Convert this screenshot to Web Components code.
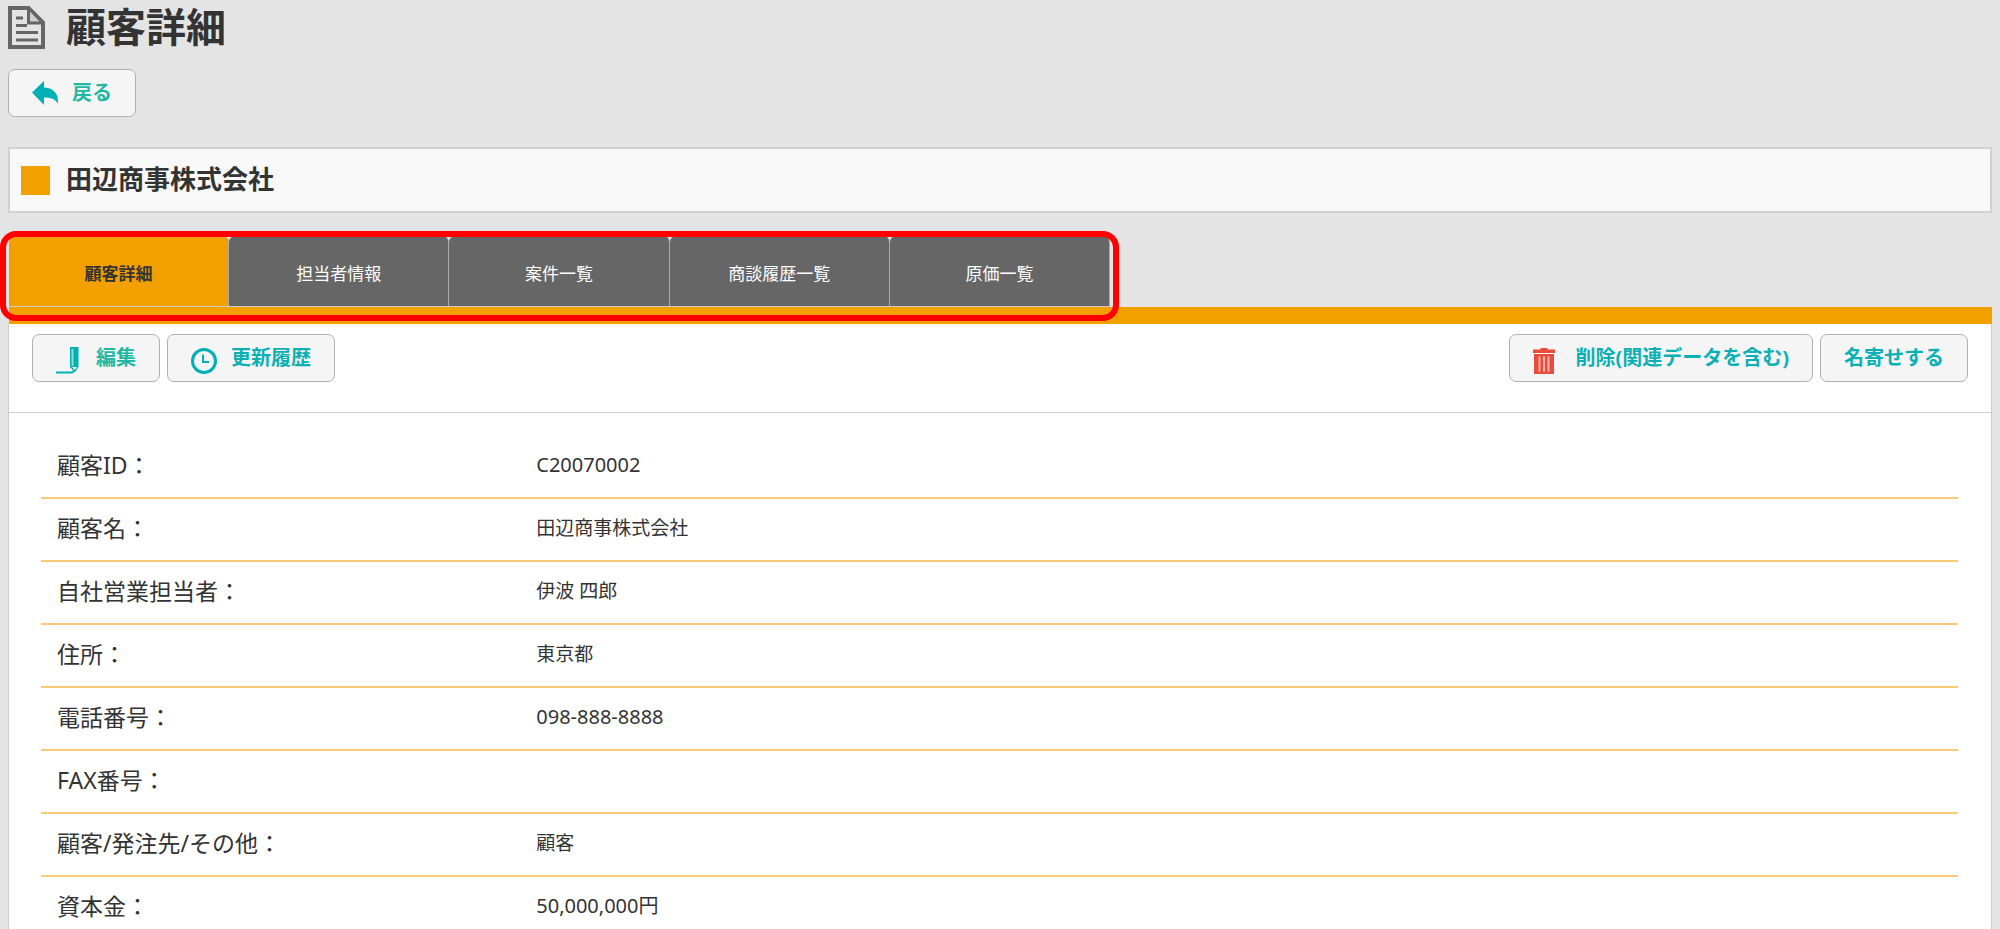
<!DOCTYPE html>
<html lang="ja">
<head>
<meta charset="utf-8">
<title>顧客詳細</title>
<style>
body{margin:0;background:#e4e4e4;color:#333;font-family:"Noto Sans","Noto Sans CJK JP",sans-serif}
</style>
</head>
<body>
<customer-page>
  <page-title slot="title">顧客詳細</page-title>
  <action-button slot="nav" icon="back">戻る</action-button>
  <company-bar slot="company">田辺商事株式会社</company-bar>
  <tab-bar slot="tabs"></tab-bar>
  <tool-bar slot="tools">
    <action-button icon="edit">編集</action-button>
    <action-button icon="clock">更新履歴</action-button>
    <action-button slot="end" icon="trash">削除(関連データを含む)</action-button>
    <action-button slot="end">名寄せする</action-button>
  </tool-bar>
  <detail-table slot="details"></detail-table>
</customer-page>
<script>
const ICONS = {
  back:'<svg width="26" height="26" viewBox="0 0 26 26"><path fill="#00b0b4" d="M0 12.500 12 1v6.500c8 0 14 5 14 14v2c-3-4.500-7-6-14-6V25z"/></svg>',
  edit:'<svg width="26" height="34" viewBox="2 -6 26 34"><path fill="none" stroke="#00b0b4" stroke-width="2" d="M1 25.500h17l4-3"/><path fill="#00b0b4" d="M16 0h8.500v20l-4 5-4.500-5z"/><path stroke="#8fdcdd" stroke-width="2" d="M18.500 2v17"/><path fill="#f5f5f5" d="M18 20h5l-2.500 3z"/></svg>',
  clock:'<svg width="26" height="32" viewBox="1 -5 26 32"><g fill="none" stroke="#00b0b4"><circle cx="14" cy="14" r="11.500" stroke-width="3"/><path stroke-width="2" d="M13 7.500V15h6"/></g></svg>',
  trash:'<svg width="28" height="32" viewBox="1 -5 28 32"><path fill="#e74c3c" d="M8.500 1h7v1.500h7.500V6H1V2.500h7.500zM2 7h20v20H2z"/><path stroke="#f8b5ae" stroke-width="2" d="M7.500 9.500v15M12 9.500v15M16.500 9.500v15"/></svg>'
};

class BaseElement extends HTMLElement {
  constructor(){
    super();
    this.attachShadow({mode:'open'}).innerHTML = '<style>:host,*{box-sizing:border-box}:host{display:block}</style>' + this.render();
  }
}

customElements.define('customer-page', class extends BaseElement {
  render(){return `<style>
    :host{padding:0 8px}
    .title{height:69px}
    .nav{height:78px}
    .company{margin-bottom:23px}
    .panel{background:#fff;border:solid #ccc;border-width:0 1px 1px}
  </style>
  <header class="title"><slot name="title"></slot></header>
  <nav class="nav"><slot name="nav"></slot></nav>
  <div class="company"><slot name="company"></slot></div>
  <slot name="tabs"></slot>
  <main class="panel"><slot name="tools"></slot><slot name="details"></slot></main>`}
});

customElements.define('page-title', class extends BaseElement {
  render(){return `<style>
    h1{display:flex;align-items:center;gap:21px;height:54px;margin:0;font-size:40px;line-height:54px}
    svg{flex:none}
  </style>
  <h1><svg width="37" height="43" viewBox="0 0 37 43"><path fill="none" stroke="#666" stroke-width="4" d="M2 2h18.500L35 16.500V41H2z"/><path fill="#cfcfcf" stroke="#666" stroke-width="3" d="M20.500 2v15H35z"/><path stroke="#666" stroke-width="3" d="M8 12h7M8 19.500h11M8 26.500h22M8 34h22"/></svg><slot></slot></h1>`}
});

customElements.define('action-button', class extends BaseElement {
  static observedAttributes = ['icon'];
  render(){return `<style>
    :host{display:inline-block}
    button{display:flex;align-items:center;gap:14px;height:48px;padding:0 23px;border:1px solid #b0b0b0;border-radius:7px;background:#f5f5f5;color:#0bb0b4;font:bold 20px/30px "Noto Sans","Noto Sans CJK JP",sans-serif;white-space:nowrap}
    :host([icon=back]) button,:host([icon=edit]) button{color:#1fb8a3}
    .icon{display:contents}
  </style>
  <button type="button"><span class="icon"></span><span><slot></slot></span></button>`}
  attributeChangedCallback(name, old, value){this.shadowRoot.querySelector('.icon').innerHTML = ICONS[value] || ''}
});

customElements.define('company-bar', class extends BaseElement {
  render(){return `<style>
    h2{display:flex;align-items:center;gap:16px;height:66px;margin:0;padding:0 11px;border:2px solid #d0d0d0;background:#f8f8f8;font-size:26px;line-height:36px}
    h2::before{content:"";width:29px;height:29px;background:#f2a000}
    span{padding-bottom:3px}
  </style><h2><span><slot></slot></span></h2>`}
});

customElements.define('tab-bar', class extends BaseElement {
  render(){return `<style>
    :host{margin-left:1px;border-bottom:17px solid #f2a000}
    nav{position:relative;display:grid;grid-template-columns:repeat(5,1fr);max-width:1101px;border-bottom:1px solid #ccc}
    a{height:70px;padding-top:23px;border-right:1px solid #aaa;border-radius:6px 6px 0 0;background:#666;color:#fff;font-size:17px;line-height:30px;text-align:center;text-decoration:none}
    a[aria-current]{background:#f2a000;color:#333;font-weight:bold}
    .highlight{position:absolute;inset:-5px -9px -15px -9px;border:6px solid #f00;border-radius:16px;pointer-events:none}
  </style>
  <nav><a href="#detail" aria-current="page">顧客詳細</a><a href="#contacts">担当者情報</a><a href="#projects">案件一覧</a><a href="#talks">商談履歴一覧</a><a href="#costs">原価一覧</a><span class="highlight"></span></nav>`}
});

customElements.define('tool-bar', class extends BaseElement {
  render(){return `<style>
    :host{display:flex;justify-content:space-between;height:89px;padding:10px 23px 0;border-bottom:1px solid #ccc}
    div{display:flex;gap:7px}
  </style><div><slot></slot></div><div><slot name="end"></slot></div>`}
});

customElements.define('detail-table', class extends BaseElement {
  render(){
    const rows = [['顧客ID：','C20070002',1],['顧客名：','田辺商事株式会社'],['自社営業担当者：','伊波 四郎'],['住所：','東京都'],['電話番号：','098-888-8888',1],['FAX番号：',''],['顧客/発注先/その他：','顧客'],['資本金：','50,000,000円',1]];
    return `<style>
    :host{padding:23px 33px 0 32px}
    table{width:100%;border-collapse:separate;border-spacing:0;table-layout:fixed}
    th,td{height:63px;padding:0 16px 4px;border-bottom:2px solid #f8ca78;text-align:left;font-weight:normal;line-height:32px}
    th{width:25%;font-size:23px}
    td{font-size:19px}
    td.number{font-size:20px}
  </style><table>${rows.map(([k,v,n])=>`<tr><th scope="row">${k}</th><td${n?' class="number"':''}>${v}</td></tr>`).join('')}</table>`}
});
</script>
</body>
</html>
